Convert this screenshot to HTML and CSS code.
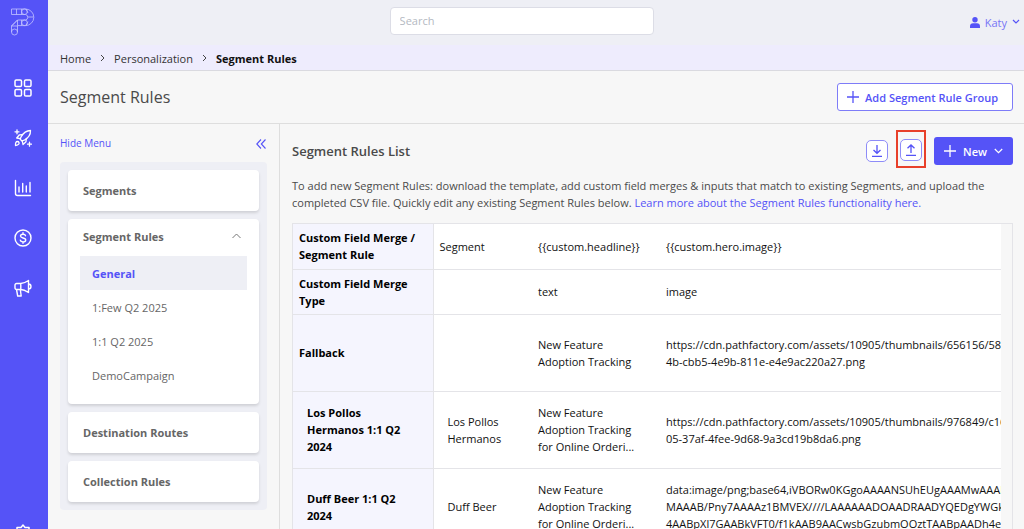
FILE: index.html
```html
<!DOCTYPE html>
<html lang="en">
<head>
  <meta charset="UTF-8" />
  <meta name="viewport" content="width=device-width, initial-scale=1.0"/>
  <title>Segment Rules</title>
  <link rel="stylesheet" href="styles.css">
</head>
<body>

  <nav class="rail">
    <a href="#" class="logo" aria-label="Home">
      <svg width="24" height="28" viewBox="0 0 24 28" fill="none" stroke="#c3c3ff" stroke-width="0.8">
        <path d="M.5 1h14a8.300 8.300 0 0 1 0 16.600h-8V24M.5 1v5.500h14M5.500 1v5.500M10.500 1v5.500M14.500 6.500a2.800 2.800 0 0 1 0 5.500H6.500L.5 18v6M.5 18h6M6.500 12v5.600M10.500 12v5.600M.5 18l6-6M15 1l2 4M15 17.600l2-4M22.500 9h-5.500"/>
        <circle cx="13.500" cy="3.700" r="2.800"/>
        <circle cx="13.500" cy="14.800" r="2.800"/>
        <circle cx="3.500" cy="24" r="3"/>
      </svg>
    </a>
    <a href="#" class="rail-link" aria-label="Dashboard">
      <svg width="18" height="18" viewBox="0 0 18 18" fill="none" stroke="#fff" stroke-width="1.500">
        <rect x="1" y="1" width="6.500" height="6.500" rx="1.300"/>
        <rect x="10.500" y="1" width="6.500" height="6.500" rx="1.300"/>
        <rect x="1" y="10.500" width="6.500" height="6.500" rx="1.300"/>
        <rect x="10.500" y="10.500" width="6.500" height="6.500" rx="1.300"/>
      </svg>
    </a>
    <a href="#" class="rail-link" aria-label="Campaigns">
      <svg width="18" height="18" viewBox="0 0 18 18" fill="none" stroke="#fff" stroke-width="1.300" stroke-linejoin="round" stroke-linecap="round">
        <path d="M16.500 1.500c-4 0-7 2-9.500 6.500l-.8 2.200 1.800 1.800 2.200-.8c4.500-2.500 6.500-5.500 6.300-9.700z"/>
        <path d="M8.500 5.700l-3.300.3-2.500 3 3.700.7M12.300 9.500l-.3 3.300-3 2.700-.7-3.700M1.500 16.500c-.2-2.500.5-4 2-4s2 1.500 1.200 2.700c-.7.9-1.700 1.200-3.200 1.300z"/>
        <path d="M3 .8v4M1 2.800h4M15.500 13.200v4M13.500 15.200h4"/>
      </svg>
    </a>
    <a href="#" class="rail-link" aria-label="Analytics">
      <svg width="18" height="18" viewBox="0 0 18 18" fill="none" stroke="#fff" stroke-width="1.400" stroke-linecap="round">
        <path d="M1.500 1.500v13a2 2 0 0 0 2 2h13M5 8v5M8.700 4.500V13M12.300 7v6M16 3.500V13"/>
      </svg>
    </a>
    <a href="#" class="rail-link" aria-label="Revenue">
      <svg width="18" height="18" viewBox="0 0 18 18" fill="none" stroke="#fff" stroke-width="1.400" stroke-linecap="round">
        <circle cx="9" cy="9" r="8"/>
        <path d="M11.500 6.700c-.2-1-1.200-1.500-2.500-1.500-1.400 0-2.500.7-2.500 1.900 0 2.600 5.200 1.200 5.200 3.900 0 1.200-1.200 1.900-2.700 1.900-1.400 0-2.500-.6-2.700-1.700M9 3.800v1.300M9 12.900v1.300"/>
      </svg>
    </a>
    <a href="#" class="rail-link" aria-label="Promotions">
      <svg width="18" height="18" viewBox="0 0 18 18" fill="none" stroke="#fff" stroke-width="1.400" stroke-linejoin="round">
        <path d="M2.500 4.500h4.300c2.800 0 5.200-1.300 7.700-3v12c-2.500-1.700-4.900-3-7.700-3H2.500A1.500 1.500 0 0 1 1 9V6a1.500 1.500 0 0 1 1.500-1.500zM6.800 4.500v6M2.500 10.500l1.200 6.500h3.500l-.9-6.500M14.500 5c3.300 0 3.300 5 0 5"/>
      </svg>
    </a>
    <a href="#" class="rail-link rail-settings" aria-label="Settings">
      <svg width="18" height="18" viewBox="0 0 18 18" fill="none" stroke="#fff" stroke-width="1.500" stroke-linejoin="round">
        <path d="M7 3.500L9 1l2 2.500h4V7l2 2-2 2v3.500h-4L9 17l-2-2.500H3V11L1 9l2-2V3.500z"/>
        <circle cx="9" cy="9" r="2.500"/>
      </svg>
    </a>
  </nav>

  <div class="page">
    <header class="topbar">
      <input type="text" class="search" placeholder="Search" aria-label="Search">
      <button class="user">
        <svg width="10" height="11" viewBox="0 0 10 11" fill="#5553f7"><circle cx="5" cy="2.700" r="2.700"/><path d="M0 11V9.300C0 7.500 1.200 6.300 3 6.300h4c1.800 0 3 1.200 3 3V11z"/></svg>
        Katy
        <svg width="8" height="6" viewBox="0 0 8 6" fill="none" stroke="#5553f7" stroke-width="1.200"><path d="M1 1l3 3 3-3"/></svg>
      </button>
    </header>

    <div class="breadcrumb">
      <a href="#">Home</a>
      <svg width="5" height="8" viewBox="0 0 5 8" fill="none" stroke="#444"><path d="M1 1l3 3-3 3"/></svg>
      <a href="#">Personalization</a>
      <svg width="5" height="8" viewBox="0 0 5 8" fill="none" stroke="#444"><path d="M1 1l3 3-3 3"/></svg>
      <strong>Segment Rules</strong>
    </div>

    <div class="title-row">
      <h1>Segment Rules</h1>
      <button class="btn btn-outline">
        <svg width="12" height="12" viewBox="0 0 12 12" fill="none" stroke="#5553f7" stroke-width="1.300"><path d="M6 0v12M0 6h12"/></svg>
        Add Segment Rule Group
      </button>
    </div>

    <div class="content">
      <aside class="sidebar">
        <button class="hide-menu">
          Hide Menu
          <svg width="10" height="10" viewBox="0 0 10 10" fill="none" stroke="#5553f7" stroke-width="1.100"><path d="M5 .5L.8 5 5 9.500M9.500.5L5.300 5l4.200 4.500"/></svg>
        </button>
        <div class="menu">
          <a href="#" class="card">Segments</a>
          <div class="card card-open">
            <button class="card-head">
              Segment Rules
              <svg width="9" height="6" viewBox="0 0 9 6" fill="none" stroke="#777"><path d="M.5 5l4-4 4 4"/></svg>
            </button>
            <a href="#" class="sub active">General</a>
            <a href="#" class="sub">1:Few Q2 2025</a>
            <a href="#" class="sub">1:1 Q2 2025</a>
            <a href="#" class="sub">DemoCampaign</a>
          </div>
          <a href="#" class="card">Destination Routes</a>
          <a href="#" class="card">Collection Rules</a>
        </div>
      </aside>

      <main class="rules">
        <div class="rules-head">
          <h2>Segment Rules List</h2>
          <button class="icon-btn" aria-label="Download template">
            <svg width="12" height="12" viewBox="0 0 12 12" fill="none" stroke="#5553f7" stroke-width="1.300"><path d="M6 0v8M2.500 5L6 8.300 9.500 5M1 11.300h10"/></svg>
          </button>
          <div class="highlight">
            <button class="icon-btn" aria-label="Upload CSV">
              <svg width="12" height="12" viewBox="0 0 12 12" fill="none" stroke="#5553f7" stroke-width="1.300"><path d="M6 9V1M2.500 4.300L6 1l3.500 3.300M1 11.300h10"/></svg>
            </button>
          </div>
          <button class="btn btn-primary">
            <svg width="12" height="12" viewBox="0 0 12 12" fill="none" stroke="#fff" stroke-width="1.300"><path d="M6 0v12M0 6h12"/></svg>
            New
            <svg width="9" height="6" viewBox="0 0 9 6" fill="none" stroke="#fff" stroke-width="1.200"><path d="M.8 1l3.700 3.700L8.200 1"/></svg>
          </button>
        </div>

        <p class="intro">To add new Segment Rules: download the template, add custom field merges &amp; inputs that match to existing Segments, and upload the completed CSV file. Quickly edit any existing Segment Rules below. <a href="#">Learn more about the Segment Rules functionality here.</a></p>

        <div class="table-wrap">
          <table>
            <colgroup>
              <col class="col-rule">
              <col class="col-segment">
              <col class="col-headline">
              <col>
            </colgroup>
            <tr>
              <th scope="col">Custom Field Merge / Segment Rule</th>
              <td>Segment</td>
              <td>{{custom.headline}}</td>
              <td>{{custom.hero.image}}</td>
            </tr>
            <tr>
              <th scope="row">Custom Field Merge Type</th>
              <td></td>
              <td>text</td>
              <td>image</td>
            </tr>
            <tr class="tall">
              <th scope="row">Fallback</th>
              <td></td>
              <td class="headline">New Feature Adoption Tracking</td>
              <td class="value">https://cdn.pathfactory.com/assets/10905/thumbnails/656156/589<br>4b-cbb5-4e9b-811e-e4e9ac220a27.png</td>
            </tr>
            <tr class="tall nested">
              <th scope="row">Los Pollos Hermanos 1:1 Q2 2024</th>
              <td>Los Pollos Hermanos</td>
              <td class="headline">New Feature Adoption Tracking for Online Orderi...</td>
              <td class="value">https://cdn.pathfactory.com/assets/10905/thumbnails/976849/c16<br>05-37af-4fee-9d68-9a3cd19b8da6.png</td>
            </tr>
            <tr class="tall nested">
              <th scope="row">Duff Beer 1:1 Q2 2024</th>
              <td>Duff Beer</td>
              <td class="headline">New Feature Adoption Tracking for Online Orderi...</td>
              <td class="value">data:image/png;base64,iVBORw0KGgoAAAANSUhEUgAAAMwAAAD<br>MAAAB/Pny7AAAAz1BMVEX////LAAAAAADOAADRAADYQEDgYWGkA<br>4AABpXl7GAABkVFT0/f1kAAB9AACwsbGzubmOOztTAABpAADh4eF</td>
            </tr>
          </table>
        </div>
      </main>
    </div>
  </div>

</body>
</html>
```

FILE: styles.css
```css
* {
  box-sizing: border-box;
}
body {
  margin: 0;
  display: flex;
  height: 100vh;
  overflow: hidden;
  font-family: "Open Sans", sans-serif;
  font-size: 11px;
  line-height: 17px;
  color: #4a4a4a;
  background: #f7f7f7;
}
a {
  color: #5553f7;
  text-decoration: none;
}
button {
  font: inherit;
  border: none;
  background: none;
  padding: 0;
  cursor: pointer;
}
svg {
  display: block;
  flex: none;
}

/* left rail */
.rail {
  flex: none;
  width: 48px;
  background: #5553f7;
  display: flex;
  flex-direction: column;
  overflow: hidden;
}
.logo {
  flex: none;
  height: 63px;
  padding: 8px 0 0 11px;
}
.rail-link {
  flex: none;
  height: 50px;
  display: flex;
  align-items: center;
  justify-content: center;
  padding-right: 3px;
}
.rail-settings {
  margin-top: 195px;
}

.page {
  flex: 1;
  min-width: 0;
  display: flex;
  flex-direction: column;
}
.topbar {
  display: grid;
  grid-template-columns: 42% 1fr;
  align-items: center;
  height: 45px;
  padding: 0 4px 4px 35%;
  background: #eeeff5;
}
.search {
  height: 28px;
  padding: 0 9px;
  border: 1px solid #dcdde6;
  border-radius: 4px;
  font: inherit;
  background: #fff;
}
.search::placeholder {
  color: #b4b9c2;
}
.user {
  justify-self: end;
  display: flex;
  align-items: center;
  gap: 5px;
  padding-top: 3px;
  color: #7775f5;
}
.breadcrumb {
  display: flex;
  align-items: center;
  gap: 9px;
  height: 26px;
  padding: 1px 12px 0;
  background: #eeecfd;
  border-bottom: 1px solid #dadae0;
}
.breadcrumb a {
  color: #333;
}
.breadcrumb strong {
  color: #111;
}
.title-row {
  display: flex;
  align-items: center;
  justify-content: space-between;
  height: 53px;
  padding: 0 11px 0 12px;
  border-bottom: 1px solid #dedede;
}
h1 {
  margin: 0;
  font-size: 16px;
  font-weight: 400;
}
.btn {
  display: flex;
  align-items: center;
  height: 28px;
  border-radius: 3px;
  font-weight: 600;
}
.btn-outline {
  gap: 6px;
  padding: 0 14px 0 9px;
  border: 1px solid #7e7cf8;
  color: #5553f7;
  background: #fff;
}
.btn-primary {
  gap: 7px;
  padding: 0 10px;
  color: #fff;
  background: #5553f7;
}

.content {
  flex: 1;
  min-height: 0;
  display: flex;
}

/* section menu */
.sidebar {
  flex: none;
  width: 232px;
  padding: 11px 12px;
  border-right: 1px solid #dedede;
}
.hide-menu {
  display: flex;
  align-items: center;
  justify-content: space-between;
  width: 100%;
  padding-right: 1px;
  margin-bottom: 10px;
  font-size: 10px;
  color: #5553f7;
}
.menu {
  display: flex;
  flex-direction: column;
  gap: 8px;
  padding: 8px;
  border-radius: 4px;
  background: #eeeff5;
}
.card {
  padding: 12px 15px;
  border-radius: 4px;
  background: #fff;
  box-shadow: 0 2px 3px rgba(0,0,0,0.13);
  color: #666;
  font-weight: 700;
}
.card-open {
  padding: 3px 12px 12px;
}
.card-head {
  display: flex;
  align-items: center;
  justify-content: space-between;
  width: 100%;
  height: 28px;
  margin-bottom: 6px;
  padding: 0 6px 0 3px;
  color: #666;
}
.sub {
  display: block;
  padding: 9px 12px 8px;
  color: #666;
  font-weight: 400;
}
.sub.active {
  background: #eeeff5;
  color: #5553f7;
  font-weight: 700;
}

/* rules list */
.rules {
  flex: 1;
  min-width: 0;
  padding: 6px 11px 0 12px;
}
.rules-head {
  display: flex;
  align-items: center;
  gap: 8px;
  margin-bottom: 5px;
}
h2 {
  flex: 1;
  margin: 0;
  font-size: 13px;
  font-weight: 600;
}
.icon-btn {
  width: 22px;
  height: 22px;
  display: flex;
  align-items: center;
  justify-content: center;
  border: 1px solid #8e8cf8;
  border-radius: 5px;
  background: #fff;
}
.highlight {
  margin-bottom: 4px;
  padding: 7px 2px 5px;
  border: 2px solid #e8402a;
}
.intro {
  margin: 0 0 12px;
}
.table-wrap {
  padding-right: 11px;
  border: 1px solid #e4e4e8;
}
table {
  width: 100%;
  table-layout: fixed;
  border-collapse: collapse;
  background: #fff;
  color: #111;
}
.col-rule {
  width: 140px;
}
.col-segment {
  width: 99px;
}
.col-headline {
  width: 128px;
}
tr {
  height: 45px;
  border-bottom: 1px solid #e4e4e8;
}
.tall {
  height: 77px;
}
th, td {
  padding: 5px 6px;
  text-align: left;
  vertical-align: middle;
}
th {
  color: #000;
  background: #f5f5fe;
  border-right: 1px solid #e4e4e8;
}
.nested th {
  padding-right: 24px;
}
.nested th, .nested th + td {
  padding-left: 14px;
}
.headline {
  padding-right: 22px;
}
.value {
  overflow: hidden;
  padding-right: 0;
  white-space: nowrap;
}
```
